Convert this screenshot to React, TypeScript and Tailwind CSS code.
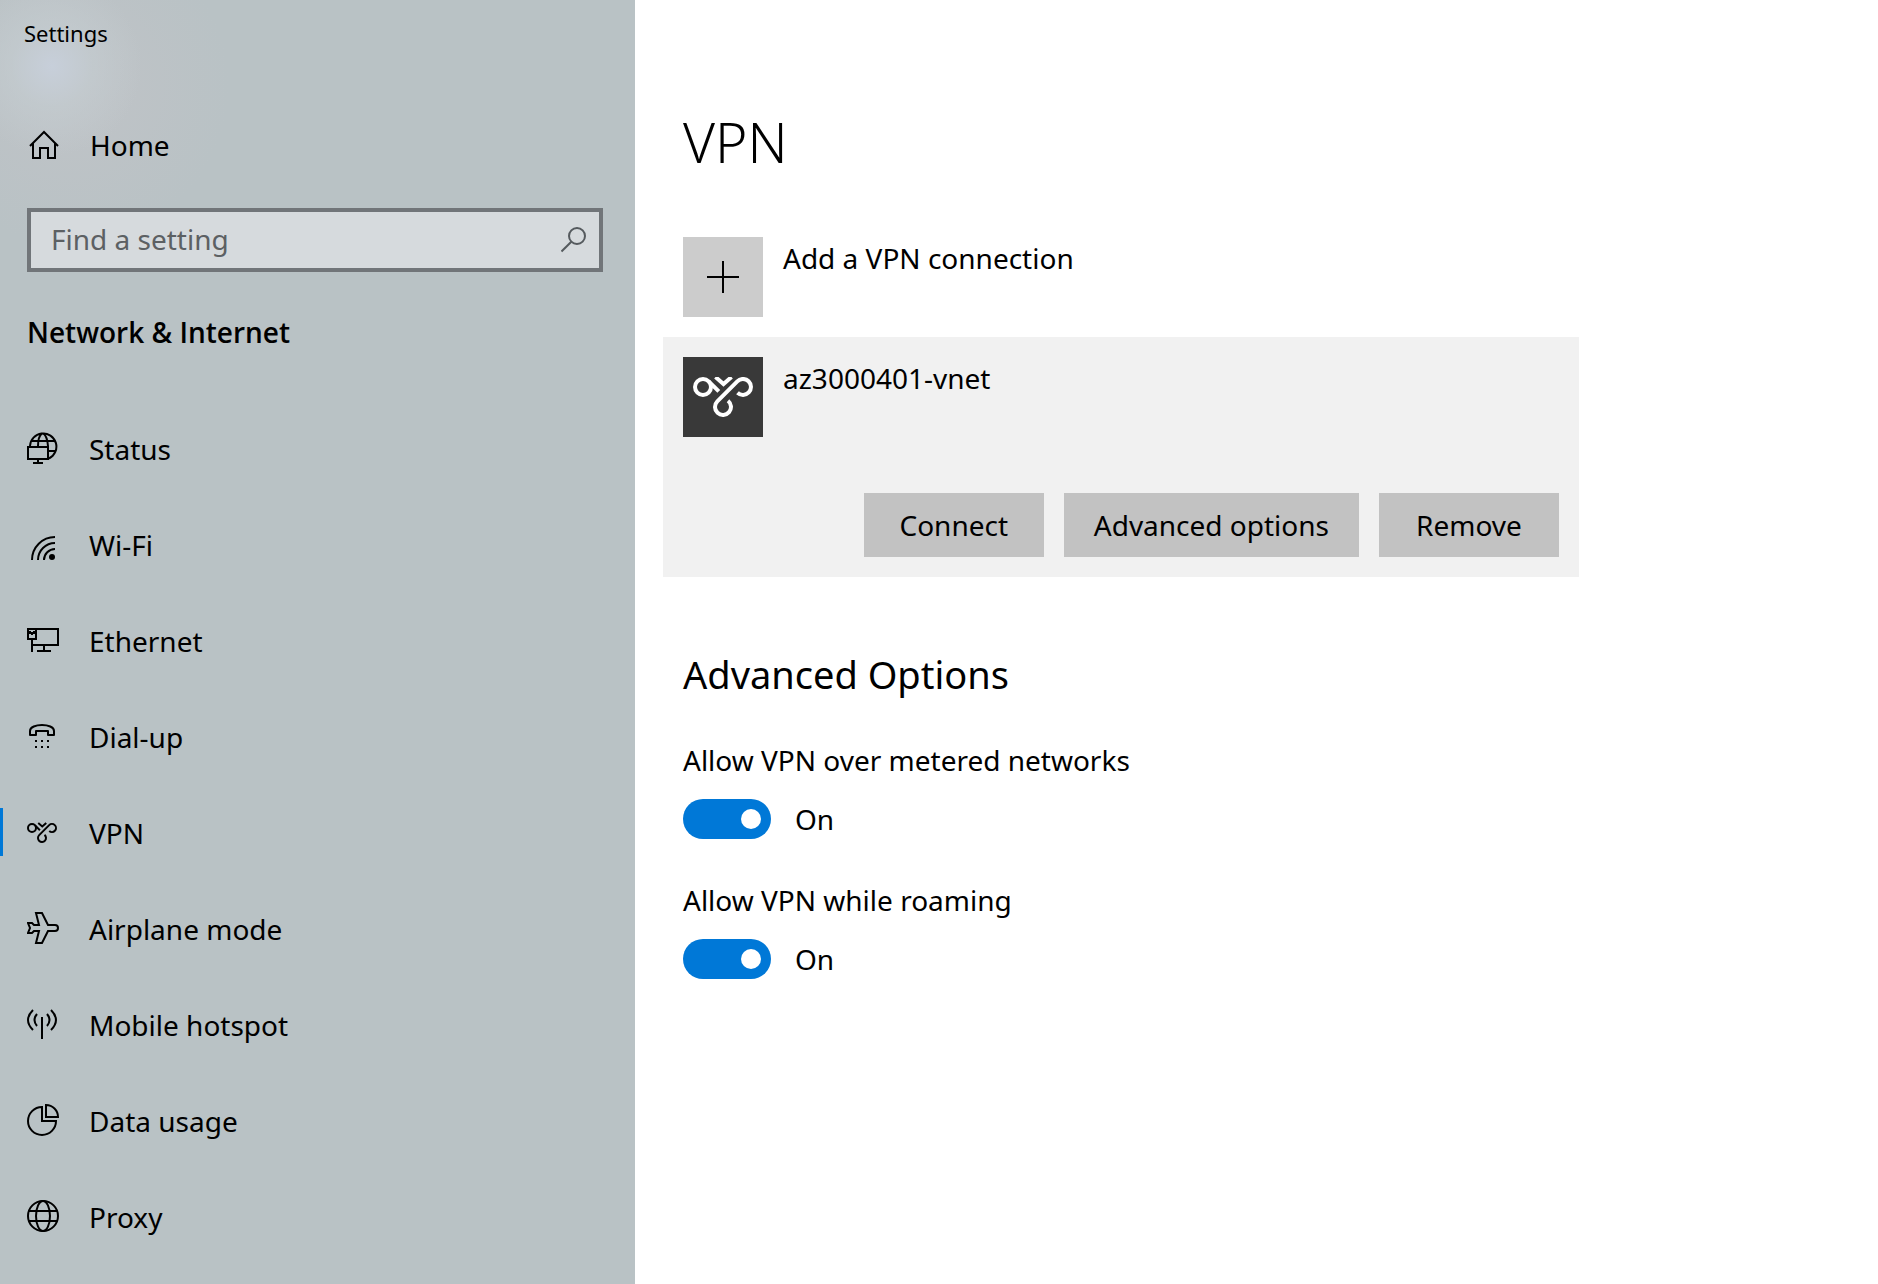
import { useState } from "react";
import type { ReactNode } from "react";

function Icon({ children }: { children: ReactNode }) {
  return (
    <svg
      aria-hidden="true"
      viewBox="0 0 32 32"
      className="size-8 shrink-0"
      fill="none"
      stroke="currentColor"
      strokeWidth="2"
    >
      {children}
    </svg>
  );
}

function VpnMark() {
  return (
    <>
      <circle cx="10" cy="10" r="8" />
      <path d="M15.7 4.3 L25.8 14.4" />
      <path d="M22.5 0 L30.5 7 L38.5 0" />
      <path d="M44.5 15.8 A8 8 0 1 0 44.3 4.3 L24.3 24.3 A8 8 0 1 0 35 23.7" />
    </>
  );
}

function HomeIcon() {
  return (
    <Icon>
      <path d="M2 17 L16 3 L30 17" />
      <path d="M5 14 V29 H12 V19 H20 V29 H27 V14" />
    </Icon>
  );
}

const items: { label: string; icon: ReactNode }[] = [
  {
    label: "Status",
    icon: (
      <Icon>
        <path d="M3 14 A13.2 13.2 0 1 1 22 26.5" />
        <path d="M4 9 H28 M22 19 H29 M11 14 C11 8 13 3 15 1.5 M21 14 C20.5 8 18.5 3 16.5 1.5" />
        <path d="M1 15 H21 V27 H1 Z M11 27 V31 M6 31 H16" />
      </Icon>
    ),
  },
  {
    label: "Wi-Fi",
    icon: (
      <Icon>
        <path d="M5 32 A23 23 0 0 1 28 9 M11 32 A17 17 0 0 1 28 15 M17 32 A11 11 0 0 1 28 21" />
        <circle cx="25" cy="29" r="3" fill="currentColor" stroke="none" />
      </Icon>
    ),
  },
  {
    label: "Ethernet",
    icon: (
      <Icon>
        <path d="M9 5 H31 V21 H5 M17 21 V27 M10 27 H24" />
        <path d="M1 5 H9 V15 H1 Z M5 15 V28 M1 8 H3 V9 H7 V8 H9 M5 9 V11" />
      </Icon>
    ),
  },
  {
    label: "Dial-up",
    icon: (
      <Icon>
        <path
          d="M3 15 V11 C3 7 9 5 15 5 C21 5 27 7 27 11 V15 H21 V11 H9 V15 Z"
          strokeLinejoin="round"
        />
        <path d="M8 21 H10 M14 21 H16 M20 21 H22 M8 27 H10 M14 27 H16 M20 27 H22" />
      </Icon>
    ),
  },
  {
    label: "VPN",
    icon: (
      <Icon>
        <g transform="translate(0 7) scale(0.5)" strokeWidth="4">
          <VpnMark />
        </g>
      </Icon>
    ),
  },
  {
    label: "Airplane mode",
    icon: (
      <Icon>
        <path d="M9 1 H15 L21 13 H28 Q31 13 31 16 Q31 19 28 19 H21 L15 31 H9 L12 19 H7 L5 21 H1 L3 16 L1 11 H5 L7 13 H12 Z" />
      </Icon>
    ),
  },
  {
    label: "Mobile hotspot",
    icon: (
      <Icon>
        <path d="M15 9 V31" />
        <path d="M10 6 Q5 12 10 18 M20 6 Q25 12 20 18 M6 2 Q-4 12 6 22 M24 2 Q34 12 24 22" />
      </Icon>
    ),
  },
  {
    label: "Data usage",
    icon: (
      <Icon>
        <path d="M15 3 A14 14 0 1 0 29 17 H15 Z" />
        <path d="M19 1 A12 12 0 0 1 31 13 H19 Z" />
      </Icon>
    ),
  },
  {
    label: "Proxy",
    icon: (
      <Icon>
        <circle cx="16" cy="16" r="15" />
        <ellipse cx="16" cy="16" rx="7" ry="15" />
        <path d="M2 11 H30 M2 21 H30" />
      </Icon>
    ),
  },
];

function Toggle({ id, label }: { id: string; label: string }) {
  const [on, setOn] = useState(true);
  return (
    <div className="flex flex-col gap-[18px]">
      <label htmlFor={id} className="leading-[42px]">
        {label}
      </label>
      <div className="flex items-center gap-6">
        <input
          id={id}
          type="checkbox"
          role="switch"
          checked={on}
          onChange={(e) => setOn(e.target.checked)}
          className="h-10 w-[88px] cursor-pointer appearance-none rounded-full bg-[#999999] p-2.5 before:block before:size-5 before:rounded-full before:bg-white checked:bg-[#0078d7] checked:before:ml-auto"
        />
        <span className="leading-10">{on ? "On" : "Off"}</span>
      </div>
    </div>
  );
}

function ActionButton({ children }: { children: ReactNode }) {
  return (
    <button type="button" className="h-16 min-w-[180px] bg-[#c2c2c2] px-[30px] text-center">
      {children}
    </button>
  );
}

export default function App() {
  const [active, setActive] = useState("VPN");
  return (
    <div className="flex min-h-screen bg-white font-['Noto_Sans','Open_Sans',sans-serif] text-[28px] leading-10 text-black">
      <aside className="w-[635px] shrink-0 bg-[#b9c2c5] bg-[radial-gradient(ellipse_90px_90px_at_52px_66px,#c7cfda_0%,#c4cdd199_45%,#c4cdd100_100%),radial-gradient(circle_160px_at_70px_85px,#c0c3c7_0%,#c0c3c700_100%)]">
        <div className="px-6 pt-[15px] text-[22px] leading-9">Settings</div>
        <a href="#home" className="mt-[70px] flex h-12 items-center gap-[30px] px-7">
          <HomeIcon />
          Home
        </a>
        <div className="mr-8 ml-[27px] mt-[39px] flex h-16 items-center border-4 border-[#717579] bg-[#d6dadd] pr-3 pl-5 text-[#555a5e]">
          <input
            type="text"
            aria-label="Find a setting"
            placeholder="Find a setting"
            className="h-10 min-w-0 flex-1 bg-transparent pb-0.5 outline-none placeholder:text-[#5c6063]"
          />
          <button type="button" aria-label="Search">
            <svg viewBox="0 0 26 26" className="size-[26px]" fill="none" stroke="currentColor" strokeWidth="2">
              <circle cx="16" cy="9" r="8" />
              <path d="M10.3 14.7 L0.500 24.500" />
            </svg>
          </button>
        </div>
        <h2 className="mt-10 pl-[27px] font-['Open_Sans','Noto_Sans',sans-serif] font-semibold">
          Network &amp; Internet
        </h2>
        <nav className="mt-12 pb-5">
          {items.map((item) => (
            <a
              key={item.label}
              href={`#${item.label}`}
              onClick={() => setActive(item.label)}
              aria-current={active === item.label ? "page" : undefined}
              className="flex h-24 items-center"
            >
              <span className={active === item.label ? "h-12 w-[3px] bg-[#0078d7]" : "h-12 w-[3px]"} />
              <span className="flex items-center gap-[30px] pl-6">
                {item.icon}
                <span className="pt-0.5">{item.label}</span>
              </span>
            </a>
          ))}
        </nav>
      </aside>
      <main className="min-w-0 flex-1 px-7 pt-[106px]">
        <h1 className="pl-5 text-[55px] leading-[72px] font-[350]">VPN</h1>
        <button type="button" className="mt-[59px] flex items-start gap-5 pl-5 text-left">
          <span className="flex size-20 items-center justify-center bg-[#cccccc]">
            <Icon>
              <path d="M16 0 V32 M0 16 H32" />
            </Icon>
          </span>
          <span className="leading-[42px]">Add a VPN connection</span>
        </button>
        <section className="mt-5 max-w-[916px] bg-[#f1f1f1] p-5">
          <div className="flex items-start gap-5">
            <span className="flex size-20 items-center justify-center bg-[#393939] text-white">
              <svg aria-hidden="true" viewBox="0 0 60 40" className="h-10 w-[60px]" fill="none" stroke="currentColor" strokeWidth="4">
                <VpnMark />
              </svg>
            </span>
            <span className="leading-[42px]">az3000401-vnet</span>
          </div>
          <div className="mt-14 flex justify-end gap-5">
            <ActionButton>Connect</ActionButton>
            <ActionButton>Advanced options</ActionButton>
            <ActionButton>Remove</ActionButton>
          </div>
        </section>
        <section className="mt-[70px] pl-5">
          <h2 className="text-[38px] leading-[54px]">Advanced Options</h2>
          <div className="mt-[38px] flex flex-col gap-10">
            <Toggle id="metered" label="Allow VPN over metered networks" />
            <Toggle id="roaming" label="Allow VPN while roaming" />
          </div>
        </section>
      </main>
    </div>
  );
}
